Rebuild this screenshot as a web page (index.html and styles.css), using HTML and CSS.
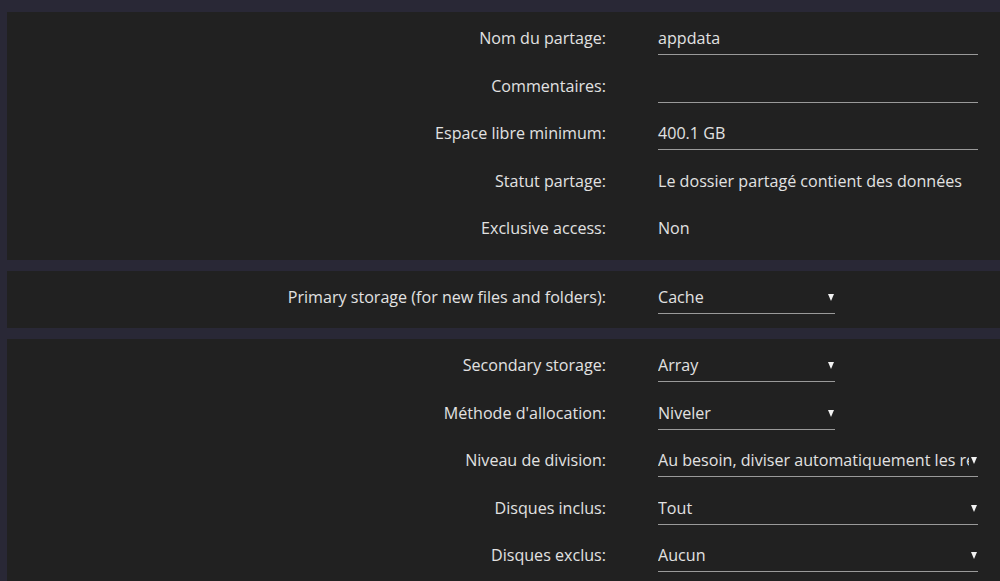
FILE: index.html
```html
<!DOCTYPE html>
<html lang="fr">
<head>
  <meta charset="UTF-8" />
  <title>Partage appdata</title>
  <link rel="stylesheet" href="styles.css">
</head>
<body>
  <div class="page">
    <section class="panel">
      <div class="row">
        <label>Nom du partage:</label>
        <div class="field text">appdata</div>
      </div>
      <div class="row">
        <label>Commentaires:</label>
        <div class="field text"></div>
      </div>
      <div class="row">
        <label>Espace libre minimum:</label>
        <div class="field text">400.1 GB</div>
      </div>
      <div class="row">
        <label>Statut partage:</label>
        <div class="value">Le dossier partagé contient des données</div>
      </div>
      <div class="row">
        <label>Exclusive access:</label>
        <div class="value">Non</div>
      </div>
    </section>

    <section class="panel">
      <div class="row">
        <label>Primary storage (for new files and folders):</label>
        <div class="field select short"><span>Cache</span></div>
      </div>
    </section>

    <section class="panel">
      <div class="row">
        <label>Secondary storage:</label>
        <div class="field select short"><span>Array</span></div>
      </div>
      <div class="row">
        <label>Méthode d'allocation:</label>
        <div class="field select short"><span>Niveler</span></div>
      </div>
      <div class="row">
        <label>Niveau de division:</label>
        <div class="field select tight"><span>Au besoin, diviser automatiquement les répertoires</span></div>
      </div>
      <div class="row">
        <label>Disques inclus:</label>
        <div class="field select"><span>Tout</span></div>
      </div>
      <div class="row">
        <label>Disques exclus:</label>
        <div class="field select"><span>Aucun</span></div>
      </div>
    </section>
  </div>
</body>
</html>
```

FILE: styles.css
```css
* {
  box-sizing: border-box;
  margin: 0;
  padding: 0;
}

body {
  background: #292836;
  color: #e2e2e2;
  font-family: 'Open Sans', 'Noto Sans', sans-serif;
  font-size: 16.1px;
  overflow: hidden;
}

.page {
  padding: 12px 0 0 7px;
  display: flex;
  flex-direction: column;
  gap: 11px;
}

.panel {
  background: #212121;
  width: 1010px;
  padding-bottom: 10px;
}

.row {
  display: grid;
  grid-template-columns: 599px 320px;
  column-gap: 52px;
  height: 47.5px;
  padding-top: 15px;
}

.row label {
  text-align: right;
  line-height: 22px;
}

.value {
  line-height: 22px;
}

.field {
  height: 28px;
  line-height: 22px;
  border-bottom: 1px solid #9a9a9a;
  position: relative;
}

.field.short {
  width: 177px;
}

.select span {
  display: block;
  width: calc(100% - 16px);
  white-space: nowrap;
  overflow: hidden;
}

.select.tight span {
  width: calc(100% - 9px);
}

.select::after {
  content: "";
  position: absolute;
  right: 1px;
  top: 8px;
  border-left: 3.5px solid transparent;
  border-right: 3.5px solid transparent;
  border-top: 7px solid #f2f2f2;
}
```
